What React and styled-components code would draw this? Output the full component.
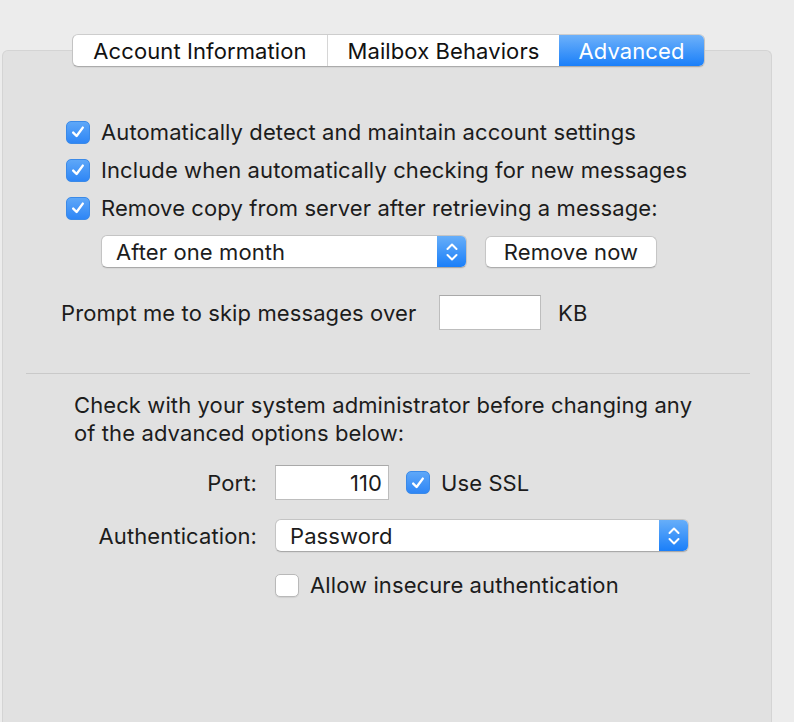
import React from "react";
import styled, { createGlobalStyle } from "styled-components";

const GlobalStyle = createGlobalStyle`
  html, body {
    margin: 0;
    background: #ececec;
  }
  body {
    font-family: Inter, "Open Sans", "Liberation Sans", sans-serif;
    font-size: 22px;
    letter-spacing: 0.1px;
    color: #1c1c1c;
    overflow: hidden;
  }
`;

const Window = styled.div`
  display: flex;
  flex-direction: column;
  align-items: flex-start;
  padding: 34px 0 0 2px;
  height: 722px;
  box-sizing: border-box;
`;

const Tabs = styled.div`
  align-self: flex-start;
  margin-left: 70px;
  display: flex;
  height: 33px;
  box-sizing: border-box;
  border-radius: 6px;
  border: 1px solid #c3c3c3;
  border-top-color: #cdcdcd;
  border-bottom-color: #ababab;
  background: #fff;
  box-shadow: 0 1px 1px rgba(0, 0, 0, 0.06);
  position: relative;
  z-index: 2;
  margin-bottom: -17px;
  overflow: hidden;
`;

const Tab = styled.div`
  width: ${(p) => p.$w}px;
  display: flex;
  align-items: center;
  justify-content: center;
  color: ${(p) => (p.$active ? "#fff" : "#111")};
  background: ${(p) =>
    p.$active ? "linear-gradient(#6db1fa, #1a7ff9)" : "transparent"};
  border-left: ${(p) => (p.$first || p.$active ? "none" : "1px solid #d6d6d6")};
`;

const Panel = styled.div`
  width: 770px;
  flex: 1;
  box-sizing: border-box;
  background: #e1e1e1;
  border: 1px solid #d4d4d4;
  border-bottom: none;
  border-radius: 6px 6px 0 0;
  padding-top: 62px;
  display: flex;
  flex-direction: column;
`;

const CheckRow = styled.label`
  display: flex;
  align-items: center;
  height: 38px;
  padding-left: 63px;
  gap: 11px;
`;

const Box = styled.span`
  width: 24px;
  height: 23px;
  box-sizing: border-box;
  border-radius: 5px;
  flex-shrink: 0;
  display: flex;
  align-items: center;
  justify-content: center;
  background: ${(p) => (p.$on ? "linear-gradient(#5ea7f8, #2e86f6)" : "#fff")};
  border: 1px solid ${(p) => (p.$on ? "#3b8ae8" : "#b9b9b9")};
  box-shadow: ${(p) => (p.$on ? "none" : "0 1px 1px rgba(0,0,0,0.08)")};
`;

const Checkbox = ({ on }) => (
  <Box $on={on}>
    {on && (
      <svg width="16" height="16" viewBox="0 0 16 16">
        <path
          d="M3.2 8.6 L6.6 12 L12.8 3.6"
          fill="none"
          stroke="#fff"
          strokeWidth="2.4"
          strokeLinecap="round"
          strokeLinejoin="round"
        />
      </svg>
    )}
  </Box>
);

const ControlsRow = styled.div`
  display: flex;
  align-items: center;
  gap: 18px;
  margin: ${(p) => p.$margin};
`;

const SelectBox = styled.div`
  width: ${(p) => p.$w}px;
  height: 33px;
  box-sizing: border-box;
  display: flex;
  background: #fff;
  border: 1px solid #c4c4c4;
  border-bottom-color: #a9a9a9;
  border-radius: 6px;
  overflow: hidden;
  box-shadow: 0 1px 1px rgba(0, 0, 0, 0.05);
`;

const SelectText = styled.span`
  flex: 1;
  display: flex;
  align-items: center;
  padding-left: 14px;
`;

const Stepper = styled.span`
  width: 29px;
  background: linear-gradient(#67aef9, #1a7ff9);
  display: flex;
  align-items: center;
  justify-content: center;
`;

const Select = ({ width, value }) => (
  <SelectBox $w={width}>
    <SelectText>{value}</SelectText>
    <Stepper>
      <svg width="14" height="22" viewBox="0 0 14 22">
        <path
          d="M2.5 8 L7 3.5 L11.5 8 M2.5 14 L7 18.5 L11.5 14"
          fill="none"
          stroke="#fff"
          strokeWidth="2"
          strokeLinecap="round"
          strokeLinejoin="round"
        />
      </svg>
    </Stepper>
  </SelectBox>
);

const Button = styled.button`
  width: 172px;
  height: 32px;
  font-family: inherit;
  font-size: inherit;
  letter-spacing: inherit;
  color: #1c1c1c;
  background: #fff;
  border: 1px solid #c6c6c6;
  border-bottom-color: #adadad;
  border-radius: 6px;
  box-shadow: 0 1px 1px rgba(0, 0, 0, 0.06);
  padding: 0;
`;

const PromptLabel = styled.span`
  width: 360px;
`;

const TextField = styled.div`
  width: ${(p) => p.$w}px;
  height: 35px;
  box-sizing: border-box;
  background: #fff;
  border: 1px solid #bdbdbd;
  border-top-color: #a9a9a9;
  display: flex;
  align-items: center;
  justify-content: flex-end;
  padding-right: 6px;
`;

const Unit = styled.span`
  margin-left: -1px;
`;

const Divider = styled.hr`
  border: none;
  border-top: 1px solid #c9c9c9;
  width: 724px;
  margin: 43px 0 0 23px;
`;

const Note = styled.p`
  margin: 17px 0 0 71px;
  line-height: 28px;
`;

const Form = styled.div`
  display: grid;
  grid-template-columns: 254px auto;
  column-gap: 18px;
  align-items: center;
  margin-top: 18px;
`;

const FieldLabel = styled.span`
  text-align: right;
  margin-top: ${(p) => p.$mt || 0}px;
`;

const FieldCell = styled.div`
  display: flex;
  align-items: center;
  gap: 17px;
  margin-top: ${(p) => p.$mt || 0}px;
`;

const InlineCheck = styled.label`
  display: flex;
  align-items: center;
  gap: 11px;
`;

export default function App() {
  return (
    <>
      <GlobalStyle />
      <Window>
        <Tabs>
          <Tab $w={254} $first>
            Account Information
          </Tab>
          <Tab $w={231}>Mailbox Behaviors</Tab>
          <Tab $w={145} $active>
            Advanced
          </Tab>
        </Tabs>
        <Panel>
          <CheckRow>
            <Checkbox on />
            Automatically detect and maintain account settings
          </CheckRow>
          <CheckRow>
            <Checkbox on />
            Include when automatically checking for new messages
          </CheckRow>
          <CheckRow>
            <Checkbox on />
            Remove copy from server after retrieving a message:
          </CheckRow>

          <ControlsRow $margin="8px 0 0 98px">
            <Select width={366} value="After one month" />
            <Button>Remove now</Button>
          </ControlsRow>

          <ControlsRow $margin="27px 0 0 58px">
            <PromptLabel>Prompt me to skip messages over</PromptLabel>
            <TextField $w={102} />
            <Unit>KB</Unit>
          </ControlsRow>

          <Divider />

          <Note>
            Check with your system administrator before changing any
            <br />
            of the advanced options below:
          </Note>

          <Form>
            <FieldLabel>Port:</FieldLabel>
            <FieldCell>
              <TextField $w={114}>110</TextField>
              <InlineCheck>
                <Checkbox on />
                Use SSL
              </InlineCheck>
            </FieldCell>

            <FieldLabel $mt={19}>Authentication:</FieldLabel>
            <FieldCell $mt={19}>
              <Select width={414} value="Password" />
            </FieldCell>

            <span />
            <FieldCell $mt={20}>
              <InlineCheck>
                <Checkbox />
                Allow insecure authentication
              </InlineCheck>
            </FieldCell>
          </Form>
        </Panel>
      </Window>
    </>
  );
}
